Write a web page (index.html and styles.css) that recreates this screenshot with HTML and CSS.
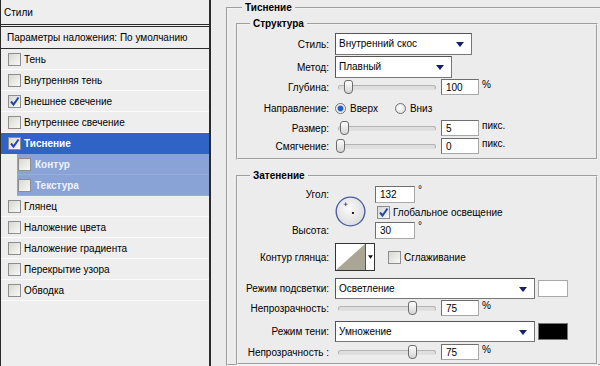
FILE: index.html
```html
<!DOCTYPE html>
<html>
<head>
<title>Стиль слоя</title>
<meta charset="utf-8">
<link rel="stylesheet" href="styles.css">
</head>
<body>

<div class="layout">

<div class="styles-panel">
    <div class="styles-head">Стили</div>
    <div class="blend-row">Параметры наложения: По умолчанию</div>
    <div class="item"><span class="cb"></span>Тень</div>
    <div class="item"><span class="cb"></span>Внутренняя тень</div>
    <div class="item"><span class="cb checked"><svg viewBox="0 0 11 11"><path d="M2 5.5 L4.5 8.5 L9.5 1.5"/></svg></span>Внешнее свечение</div>
    <div class="item"><span class="cb"></span>Внутреннее свечение</div>
    <div class="item selected"><span class="cb checked"><svg viewBox="0 0 11 11"><path d="M2 5.5 L4.5 8.5 L9.5 1.5"/></svg></span>Тиснение</div>
    <div class="item sub"><span class="cb"></span>Контур</div>
    <div class="item sub"><span class="cb"></span>Текстура</div>
    <div class="item"><span class="cb"></span>Глянец</div>
    <div class="item"><span class="cb"></span>Наложение цвета</div>
    <div class="item"><span class="cb"></span>Наложение градиента</div>
    <div class="item"><span class="cb"></span>Перекрытие узора</div>
    <div class="item"><span class="cb"></span>Обводка</div>
</div>

<div class="settings">
<fieldset class="outer">
    <legend>Тиснение</legend>

    <fieldset class="group structure">
        <legend>Структура</legend>
        <div class="row tall">
            <span class="lbl">Стиль:</span>
            <div class="select w-style">Внутренний скос<svg class="arr" viewBox="0 0 8 5"><path d="M0 0 H8 L4 5 Z"/></svg></div>
        </div>
        <div class="row tall gap1">
            <span class="lbl">Метод:</span>
            <div class="select w-method">Плавный<svg class="arr" viewBox="0 0 8 5"><path d="M0 0 H8 L4 5 Z"/></svg></div>
        </div>
        <div class="row">
            <span class="lbl">Глубина:</span>
            <div class="slider"><span class="thumb" style="left:5px"></span></div>
            <div class="num">100</div><span class="unit">%</span>
        </div>
        <div class="row dir">
            <span class="lbl">Направление:</span>
            <span class="radio on"></span><span class="rlbl">Вверх</span>
            <span class="radio"></span><span class="rlbl">Вниз</span>
        </div>
        <div class="row">
            <span class="lbl">Размер:</span>
            <div class="slider"><span class="thumb" style="left:1px"></span></div>
            <div class="num">5</div><span class="unit">пикс.</span>
        </div>
        <div class="row">
            <span class="lbl">Смягчение:</span>
            <div class="slider"><span class="thumb" style="left:-3px"></span></div>
            <div class="num">0</div><span class="unit">пикс.</span>
        </div>
    </fieldset>

    <fieldset class="group shading">
        <legend>Затенение</legend>
        <div class="angle-grid">
            <span class="lbl r1">Угол:</span>
            <div class="dial">
                <svg viewBox="0 0 32 32">
                    <defs>
                        <radialGradient id="dg" cx="45%" cy="40%" r="60%">
                            <stop offset="0" stop-color="#fbfbfb"/>
                            <stop offset="1" stop-color="#dcdcdc"/>
                        </radialGradient>
                    </defs>
                    <circle cx="16" cy="16" r="14.8" fill="url(#dg)" stroke="#4b5c9e" stroke-width="1.4"/>
                    <path d="M11 6.5 V10.5 M9 8.5 H13" stroke="#444" stroke-width="0.8" fill="none"/>
                    <rect x="17.5" y="16.5" width="2" height="2" fill="#111"/>
                </svg>
            </div>
            <div class="r1 ctl"><div class="num wide">132</div><span class="deg">°</span></div>
            <div class="r2 ctl"><span class="cb checked"><svg viewBox="0 0 11 11"><path d="M2 5.5 L4.5 8.5 L9.5 1.5"/></svg></span><span class="cblbl">Глобальное освещение</span></div>
            <span class="lbl r3">Высота:</span>
            <div class="r3 ctl"><div class="num wide">30</div><span class="deg">°</span></div>
        </div>
        <div class="row contour-row">
            <span class="lbl">Контур глянца:</span>
            <div class="contour">
                <svg class="curve" viewBox="0 0 30 26" preserveAspectRatio="none"><path d="M0 26 L30 0 L30 26 Z" fill="#a9a696"/></svg>
                <span class="carr"><svg viewBox="0 0 6 4"><path d="M0 0 H6 L3 4 Z"/></svg></span>
            </div>
            <span class="cb smooth"></span><span class="cblbl">Сглаживание</span>
        </div>
        <div class="row tall mode">
            <span class="lbl">Режим подсветки:</span>
            <div class="select w-mode">Осветление<svg class="arr" viewBox="0 0 8 5"><path d="M0 0 H8 L4 5 Z"/></svg></div>
            <span class="swatch white"></span>
        </div>
        <div class="row">
            <span class="lbl">Непрозрачность:</span>
            <div class="slider"><span class="thumb" style="left:69px"></span></div>
            <div class="num">75</div><span class="unit">%</span>
        </div>
        <div class="row tall mode2">
            <span class="lbl">Режим тени:</span>
            <div class="select w-mode">Умножение<svg class="arr" viewBox="0 0 8 5"><path d="M0 0 H8 L4 5 Z"/></svg></div>
            <span class="swatch black"></span>
        </div>
        <div class="row last">
            <span class="lbl">Непрозрачность :</span>
            <div class="slider"><span class="thumb" style="left:69px"></span></div>
            <div class="num">75</div><span class="unit">%</span>
        </div>
    </fieldset>
</fieldset>
</div>

</div>

</body>
</html>
```

FILE: styles.css
```css
html, body { margin: 0; padding: 0; }
body { background: #ececec; font-family: "Liberation Sans", Arial, sans-serif; font-size: 10px; color: #000; width: 600px; height: 366px; overflow: hidden; }
.layout { display: flex; height: 366px; }

/* left list of styles */
.styles-panel { width: 208px; flex: none; border-left: 1px solid #2a2a2a; border-right: 2px solid #2a2a2a; background: #eeeeee; }
.styles-head { height: 24px; line-height: 26px; padding-left: 3px; border-bottom: 1px solid #2a2a2a; margin-bottom: 1px; }
.blend-row { height: 21px; line-height: 21px; padding-left: 6px; border-top: 1px solid #2a2a2a; border-bottom: 1px solid #2a2a2a; }
.item { height: 20px; display: flex; align-items: center; padding-left: 7px; border-bottom: 1px solid #fbfbfb; white-space: nowrap; }
.item .cb { margin-right: 3px; }
.item.selected { background: #2f63c6; color: #fff; font-weight: bold; border-bottom-color: #2f63c6; }
.item.sub { margin-left: 16px; padding-left: 1px; background: #8aa3d6; color: #eef2fa; font-weight: bold; border-bottom: 1px solid #97aedc; }
.item.sub .cb { margin-right: 4px; }

.cb { width: 11px; height: 11px; flex: none; border: 1px solid #8d8d8d; background: linear-gradient(135deg, #d8d8d2, #f8f8f6); display: inline-flex; align-items: center; justify-content: center; box-sizing: content-box; }
.cb svg { width: 11px; height: 11px; }
.cb svg path { fill: none; stroke: #2445b0; stroke-width: 2; }

/* right settings */
.settings { margin-left: 15px; padding-top: 1px; }
fieldset { margin: 0; padding: 0; min-inline-size: auto; border: 2px groove #f2f2f2; }
legend { font-weight: bold; line-height: 13px; padding: 0 3px; }
.outer { width: 380px; height: 365px; box-sizing: border-box; }
.outer > legend { margin-left: 14px; }
.group { margin-left: 8px; width: 362px; box-sizing: border-box; }
.group > legend { margin-left: 12px; }
.structure { margin-top: 3px; padding: 3px 0 3px; }
.shading { margin-top: 9px; padding: 4px 0 2px; }

.row { display: flex; align-items: center; height: 18px; }
.row.tall { height: 22px; }
.gap1 { margin-top: 1px; }
.row.dir { height: 22px; margin-top: 1px; }
.lbl { width: 97px; flex: none; box-sizing: border-box; padding-right: 6px; text-align: right; white-space: nowrap; }

.select { position: relative; height: 22px; box-sizing: border-box; border: 1px solid #777; border-top-color: #555; border-left-color: #555; background: #fff; padding-left: 3px; line-height: 20px; }
.select .arr { position: absolute; right: 7px; top: 8px; width: 8px; height: 5px; }
.arr path { fill: #14206a; }
.w-style { width: 137px; }
.w-method { width: 117px; }
.w-mode { width: 200px; height: 21px; line-height: 19px; }

.slider { position: relative; width: 96px; height: 3px; margin-left: 3px; border: 1px solid #b4b4b4; border-bottom-color: #e0e0e0; border-radius: 3px; background: #dedede; }
.thumb { position: absolute; top: -6px; width: 7px; height: 12px; border: 1px solid #6c6c6c; border-radius: 3px 3px 4px 4px; background: linear-gradient(#ffffff, #d4d4d4); }
.num { width: 38px; height: 16px; box-sizing: border-box; margin-left: 5px; border: 1px solid #6e6e6e; border-right-color: #a8a8a8; border-bottom-color: #a8a8a8; background: #fff; padding-left: 4px; line-height: 15px; }
.num.wide { width: 40px; margin-left: 0; height: 17px; }
.unit { margin-left: 3px; align-self: flex-start; padding-top: 1px; }

.radio { width: 11px; height: 11px; box-sizing: border-box; border-radius: 50%; border: 1px solid #6f6f6f; background: radial-gradient(circle at 40% 40%, #fff, #d6d6d6); flex: none; }
.radio.on { background: radial-gradient(circle, #1e5fc0 0 2.4px, #9ab8e6 3px, #fff 4px, #dcdcdc); }
.rlbl { margin-left: 4px; margin-right: 17px; }

/* shading block */
.angle-grid { display: grid; grid-template-columns: 97px 40px auto; grid-template-rows: 17px 17px 17px; row-gap: 1px; }
.angle-grid .lbl { align-self: center; }
.r1 { grid-row: 1; }
.r2 { grid-row: 2; grid-column: 3; }
.r3 { grid-row: 3; }
.angle-grid .lbl.r1, .angle-grid .lbl.r3 { grid-column: 1; }
.angle-grid .ctl.r1, .angle-grid .ctl.r3 { grid-column: 3; }
.ctl { display: flex; align-items: center; }
.r2.ctl { padding-left: 2px; }
.dial { grid-column: 2; grid-row: 1 / 4; align-self: center; width: 31px; height: 31px; margin-top: -2px; }
.dial svg { width: 31px; height: 31px; display: block; }
.deg { align-self: flex-start; margin-left: 3px; font-size: 10px; line-height: 8px; }
.cblbl { margin-left: 3px; white-space: nowrap; }

.contour-row { height: 28px; margin-top: 4px; }
.contour { display: flex; width: 40px; height: 28px; box-sizing: border-box; border: 1px solid #333; background: #fff; }
.contour .curve { width: 29px; height: 26px; display: block; border-right: 1px solid #555; }
.carr { flex: 1; display: flex; align-items: center; justify-content: center; }
.carr svg { width: 5px; height: 4px; }
.carr path { fill: #111; }
.smooth { margin-left: 13px; }

.mode { height: 21px; margin-top: 6px; }
.mode2 { height: 21px; margin-top: 3px; }
.last { margin-top: 1px; }
.swatch { width: 30px; height: 17px; box-sizing: border-box; margin-left: 3px; flex: none; }
.swatch.white { background: #fff; border: 1px solid #a9a9a9; }
.swatch.black { background: #000; border: 1px solid #777; }
```
